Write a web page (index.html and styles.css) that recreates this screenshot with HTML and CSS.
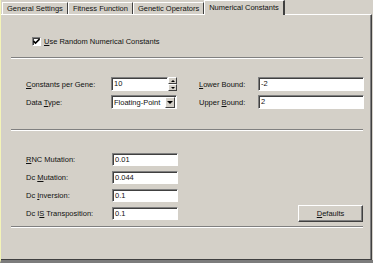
FILE: index.html
```html
<!DOCTYPE html>
<html lang="en">
    <head>
        <meta charset="UTF-8" />
        <title>Numerical Constants</title>
        <link rel="stylesheet" href="styles.css">
    </head>
    <body>
        <div class="dialog">
            <div class="tabs">
                <div class="tab">General Settings</div>
                <div class="tab">Fitness Function</div>
                <div class="tab">Genetic Operators</div>
                <div class="tab active">Numerical Constants</div>
            </div>

            <div class="panel">
                <div class="check-row">
                    <span class="checkbox">
                        <svg width="7" height="7" viewBox="0 0 7 7">
                            <path d="M0.5 3 L2.5 5 L6.5 1" fill="none" stroke="#000" stroke-width="1.6" />
                        </svg>
                    </span>
                    <span><u>U</u>se Random Numerical Constants</span>
                </div>

                <div class="sep"></div>

                <div class="bounds">
                    <span class="label"><u>C</u>onstants per Gene:</span>
                    <div class="spin">
                        <span class="field">10</span>
                        <span class="spin-buttons">
                            <span class="spin-btn"><i class="arrow up"></i></span>
                            <span class="spin-btn"><i class="arrow down"></i></span>
                        </span>
                    </div>
                    <span class="label right-label"><u>L</u>ower Bound:</span>
                    <span class="field wide">-2</span>

                    <span class="label">Data <u>T</u>ype:</span>
                    <div class="combo">
                        <span class="combo-text">Floating-Point</span>
                        <span class="combo-btn"><i class="arrow down big"></i></span>
                    </div>
                    <span class="label right-label">Upper <u>B</u>ound:</span>
                    <span class="field wide">2</span>
                </div>

                <div class="sep"></div>

                <div class="rates">
                    <div class="rate-list">
                        <div class="rate-row">
                            <span class="label"><u>R</u>NC Mutation:</span>
                            <span class="field">0.01</span>
                        </div>
                        <div class="rate-row">
                            <span class="label">Dc <u>M</u>utation:</span>
                            <span class="field">0.044</span>
                        </div>
                        <div class="rate-row">
                            <span class="label">Dc <u>I</u>nversion:</span>
                            <span class="field">0.1</span>
                        </div>
                        <div class="rate-row">
                            <span class="label">Dc I<u>S</u> Transposition:</span>
                            <span class="field">0.1</span>
                        </div>
                    </div>
                    <button class="button"><u>D</u>efaults</button>
                </div>

                <div class="sep"></div>
            </div>
        </div>
    </body>
</html>
```

FILE: styles.css
```css
body,
html {
    margin: 0;
    padding: 0;
    width: 373px;
    height: 263px;
    overflow: hidden;
    background: #d4d0c8;
    font-family: "Liberation Sans", Arial, sans-serif;
    font-size: 7.5px;
    color: #101010;
}

.dialog {
    height: 263px;
    box-sizing: border-box;
    border-left: 1px solid #f4f4b8;
    border-bottom: 3px solid #7c7c7c;
    display: flex;
    flex-direction: column;
}

/* tab strip */
.tabs {
    display: flex;
    height: 14px;
    padding-left: 1px;
    align-items: flex-end;
}

.tab {
    height: 12px;
    line-height: 12px;
    padding: 0 4px;
    border-left: 1px solid #ffffff;
    border-top: 1px solid #ffffff;
    border-right: 1px solid #404040;
    box-sizing: border-box;
    white-space: nowrap;
}

.tab.active {
    height: 15px;
    line-height: 13px;
    margin-bottom: -1px;
    background: #d4d0c8;
    border-right-width: 2px;
    position: relative;
    z-index: 1;
}

/* page body */
.panel {
    flex: 1;
    border-top: 1px solid #ffffff;
    border-right: 1px solid #404040;
    border-bottom: 1px solid #404040;
    box-shadow: inset -1px 0 0 #808080;
    margin-right: 1px;
    padding: 0 8px 0 10px;
}

.check-row {
    display: flex;
    align-items: center;
    gap: 3px;
    margin: 22px 0 0 21px;
    height: 9px;
}

.checkbox {
    width: 9px;
    height: 9px;
    box-sizing: border-box;
    background: #ffffff;
    border-top: 1px solid #808080;
    border-left: 1px solid #808080;
    border-right: 1px solid #ffffff;
    border-bottom: 1px solid #ffffff;
    box-shadow: inset 1px 1px 0 #404040;
    display: flex;
    align-items: center;
    justify-content: center;
}

.sep {
    height: 1px;
    background: #808080;
    border-bottom: 1px solid #ffffff;
}

.check-row + .sep {
    margin-top: 11px;
}

.label {
    white-space: nowrap;
}

.field {
    display: block;
    height: 14px;
    line-height: 12px;
    box-sizing: border-box;
    padding-left: 2px;
    background: #ffffff;
    border-top: 1px solid #808080;
    border-left: 1px solid #808080;
    border-right: 1px solid #ffffff;
    border-bottom: 1px solid #ffffff;
    box-shadow: inset 1px 1px 0 #404040;
}

/* constants / bounds block */
.bounds {
    display: grid;
    grid-template-columns: 85px 66px 59px 106px;
    column-gap: 0;
    row-gap: 4px;
    align-items: center;
    margin: 18px 0 20px 15px;
}

.right-label {
    margin-left: 22px;
}

.bounds .wide {
    margin-left: 22px;
    width: 106px;
}

.spin {
    display: flex;
    height: 14px;
}

.spin .field {
    flex: 1;
}

.spin-buttons {
    width: 9px;
    display: flex;
    flex-direction: column;
}

.spin-btn,
.combo-btn {
    flex: 1;
    display: flex;
    align-items: center;
    justify-content: center;
    background: #d4d0c8;
    border-top: 1px solid #ffffff;
    border-left: 1px solid #ffffff;
    border-right: 1px solid #404040;
    border-bottom: 1px solid #404040;
    box-sizing: border-box;
}

.arrow {
    width: 0;
    height: 0;
    border-left: 2px solid transparent;
    border-right: 2px solid transparent;
}

.arrow.up {
    border-bottom: 2px solid #000000;
}

.arrow.down {
    border-top: 2px solid #000000;
}

.arrow.big {
    border-left-width: 3px;
    border-right-width: 3px;
    border-top-width: 3px;
}

.combo {
    display: flex;
    height: 14px;
    box-sizing: border-box;
    background: #ffffff;
    border-top: 1px solid #808080;
    border-left: 1px solid #808080;
    border-right: 1px solid #ffffff;
    border-bottom: 1px solid #ffffff;
    box-shadow: inset 1px 1px 0 #404040;
    padding: 1px 1px 0 1px;
}

.combo-text {
    flex: 1;
    line-height: 11px;
    padding-left: 1px;
}

.combo-btn {
    flex: 0 0 10px;
}

/* rates block */
.rates {
    display: flex;
    align-items: flex-end;
    justify-content: space-between;
    margin: 22px 0 6px 15px;
}

.rate-list {
    display: flex;
    flex-direction: column;
    gap: 5px;
}

.rate-row {
    display: grid;
    grid-template-columns: 86px 66px;
    align-items: center;
}

.rate-row .field {
    height: 13px;
    line-height: 11px;
}

.button {
    width: 65px;
    height: 17px;
    margin-bottom: -2px;
    padding: 0;
    font: inherit;
    color: #101010;
    background: #d4d0c8;
    border-top: 1px solid #ffffff;
    border-left: 1px solid #ffffff;
    border-right: 1px solid #404040;
    border-bottom: 1px solid #404040;
    box-shadow: inset -1px -1px 0 #808080;
}
```
